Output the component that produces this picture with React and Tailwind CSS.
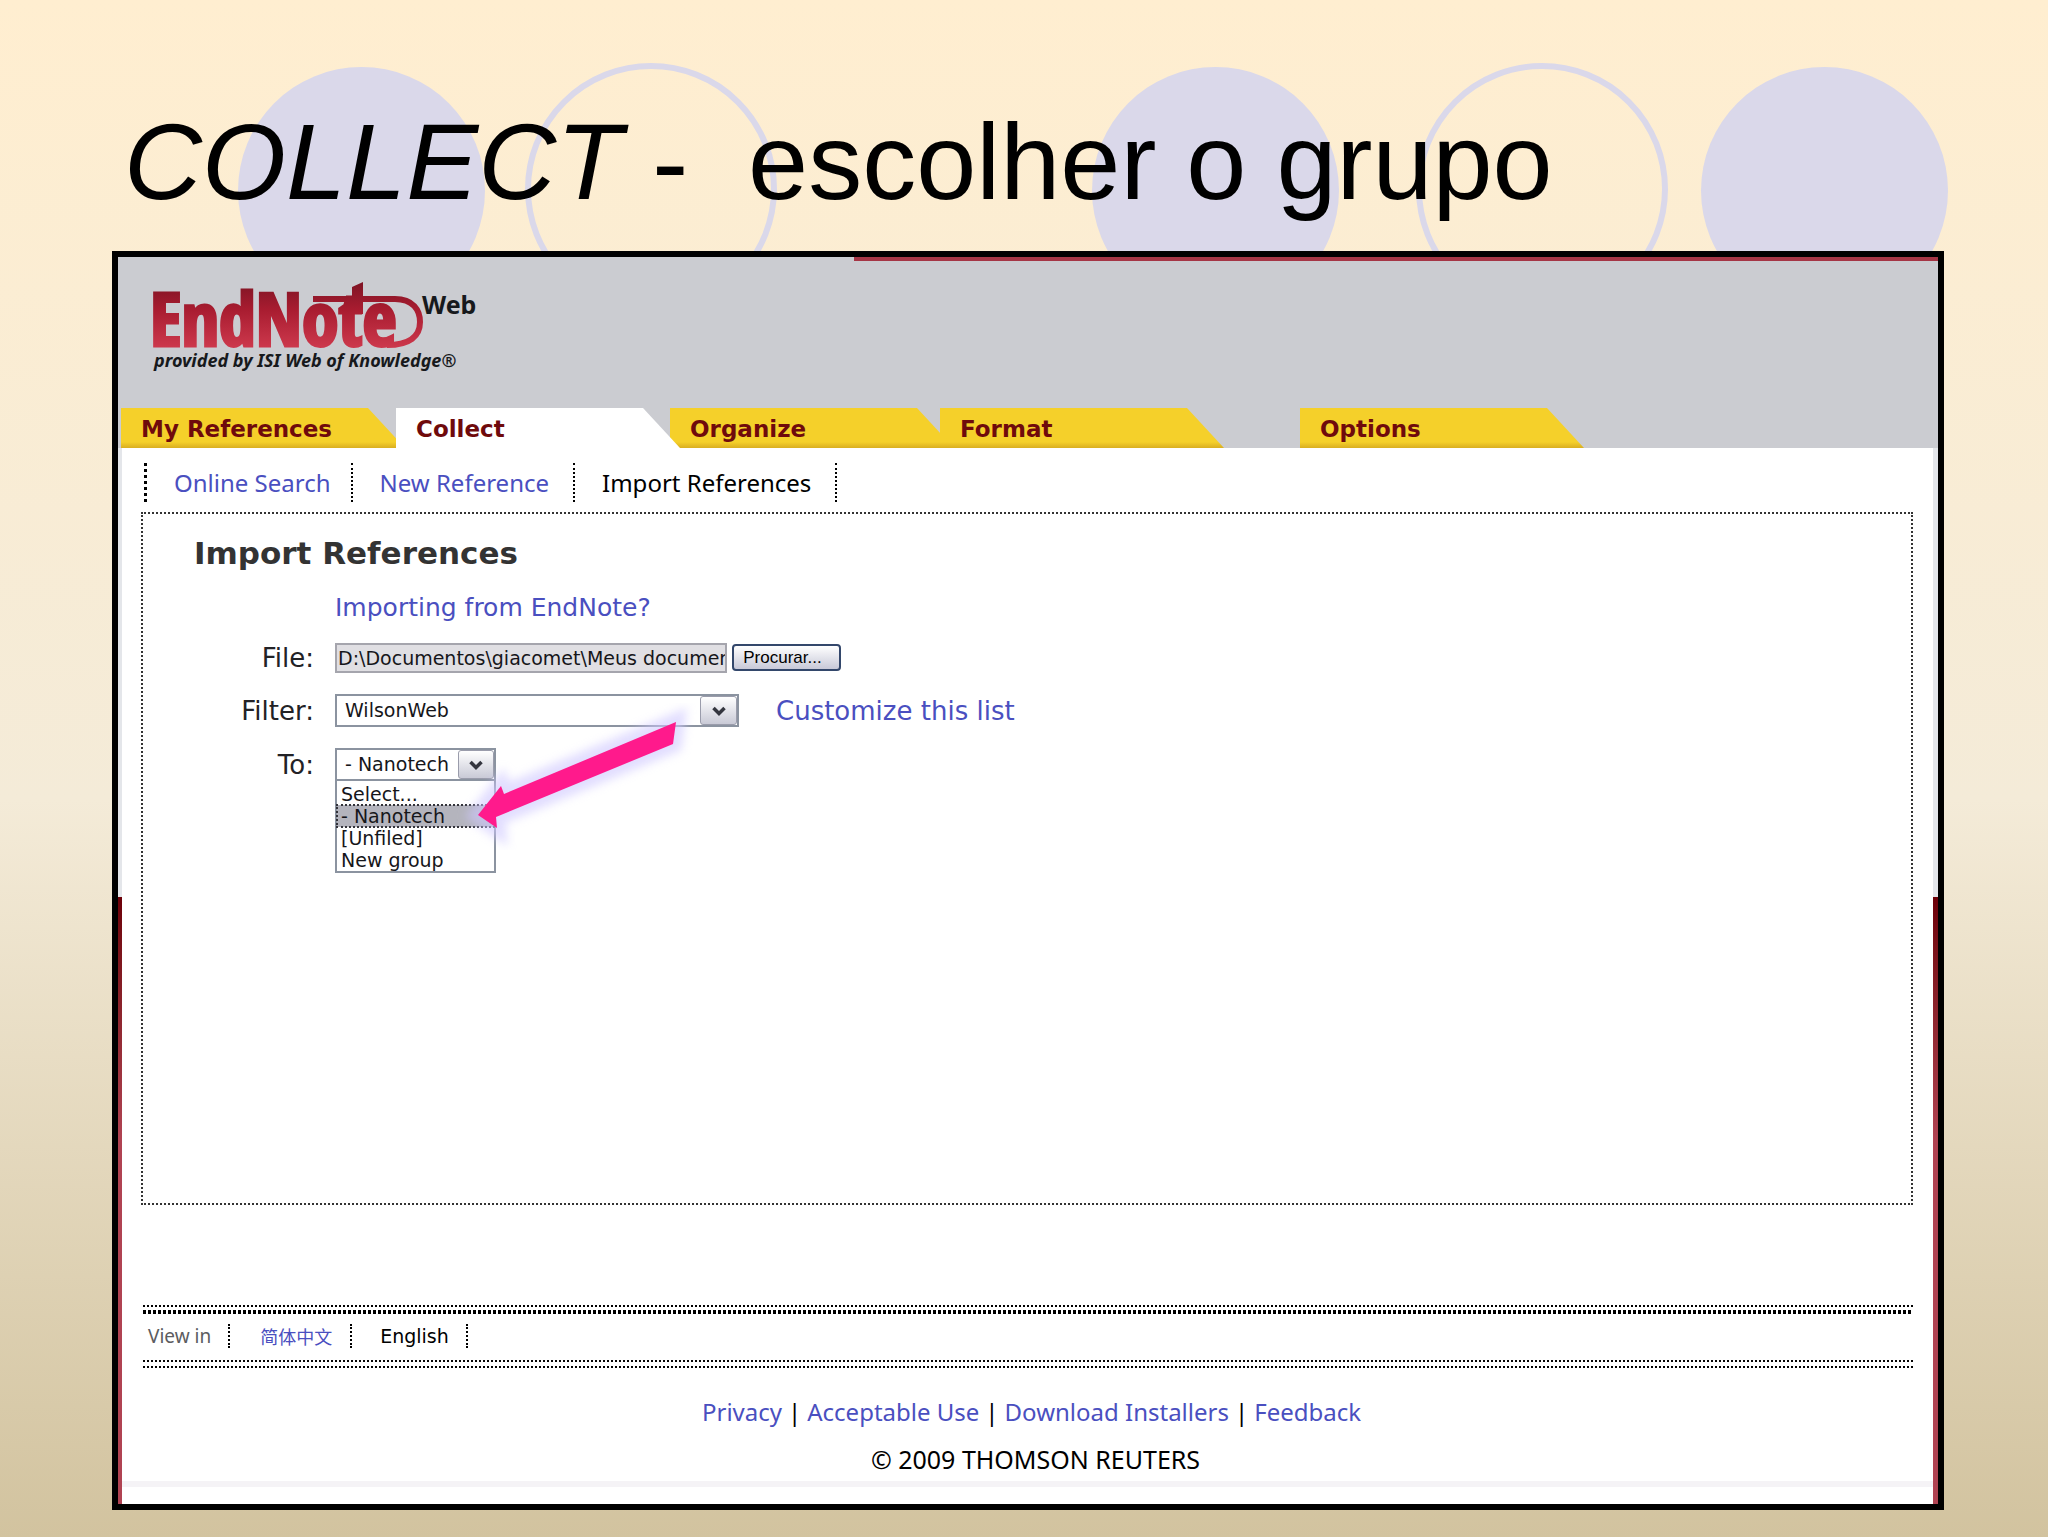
import React from "react";

const LINK = "text-[#4a4fc0] hover:underline";

function Circles() {
  return (
    <div aria-hidden="true" className="absolute inset-0 overflow-hidden">
      <div className="absolute left-[238px] top-[67px] size-[247px] rounded-full bg-[#dad8ea]" />
      <div className="absolute left-[525px] top-[63px] size-[252px] rounded-full border-[6px] border-[#dad8ea]" />
      <div className="absolute left-[1092px] top-[67px] size-[247px] rounded-full bg-[#dad8ea]" />
      <div className="absolute left-[1416px] top-[63px] size-[252px] rounded-full border-[6px] border-[#dad8ea]" />
      <div className="absolute left-[1701px] top-[67px] size-[247px] rounded-full bg-[#dad8ea]" />
    </div>
  );
}

function Logo() {
  return (
    <svg width="350" height="123" viewBox="-6 -13 350 123" role="img" aria-label="EndNote Web">
      <defs>
        <linearGradient id="logoRed" gradientUnits="userSpaceOnUse" x1="0" y1="8" x2="0" y2="76">
          <stop offset="0" stopColor="#7e1424" />
          <stop offset="0.4" stopColor="#a81c30" />
          <stop offset="1" stopColor="#cf3a4e" />
        </linearGradient>
      </defs>
      <text
        x="-1"
        y="72"
        fontSize="74"
        fontWeight="700"
        fill="url(#logoRed)"
        stroke="url(#logoRed)"
        strokeWidth="3"
        fontFamily="'Liberation Sans Narrow','Open Sans Condensed','DejaVu Sans Condensed',sans-serif"
      >
        EndNote
      </text>
      <path
        d="M162 25H244C262 25 269 36 269 48C269 62 259 71 236 71"
        fill="none"
        stroke="url(#logoRed)"
        strokeWidth="6"
      />
      <path d="M201 13L212 8V40H201Z" fill="url(#logoRed)" />
      <text x="271" y="40" fontSize="25" fontWeight="700" fill="#17191c" fontFamily="'Noto Sans',sans-serif">
        Web
      </text>
      <text
        x="3"
        y="93"
        fontSize="18"
        fontWeight="700"
        fontStyle="italic"
        fill="#17191c"
        fontFamily="'Noto Sans',sans-serif"
      >
        provided by ISI Web of Knowledge®
      </text>
    </svg>
  );
}

const TAB =
  "relative h-10 w-[284px] pt-[2px] pl-5 text-left text-[23px] leading-[38px] font-bold text-[#6f0a0c] [clip-path:polygon(0_0,calc(100%_-_37px)_0,100%_100%,0_100%)]";
const YELLOW = "bg-linear-to-b from-[#f5d02a] from-85% to-[#d9ae20]";

function Tabs() {
  return (
    <nav aria-label="Main" className="flex pl-[3px]">
      <button className={`${TAB} ${YELLOW} z-10`}>My References</button>
      <button aria-current="page" className={`${TAB} z-20 -ml-[9px] bg-white`}>
        Collect
      </button>
      <button className={`${TAB} ${YELLOW} z-10 -ml-[10px]`}>Organize</button>
      <button className={`${TAB} ${YELLOW} -ml-[14px]`}>Format</button>
      <button className={`${TAB} ${YELLOW} ml-[76px]`}>Options</button>
    </nav>
  );
}

function SubNav() {
  return (
    <nav
      aria-label="Collect"
      className="mt-[15px] ml-[22px] flex h-[39px] font-['Noto_Sans'] text-[24px] leading-[39px]"
    >
      <a href="#online" className={`${LINK} border-l-[3px] border-dotted border-l-black pr-5 pl-[27px]`}>
        Online Search
      </a>
      <a href="#new" className={`${LINK} border-l-2 border-dotted border-l-black pr-6 pl-[27px]`}>
        New Reference
      </a>
      <a
        href="#import"
        aria-current="page"
        className="border-x-2 border-dotted border-black pr-6 pl-[27px] text-black"
      >
        Import References
      </a>
    </nav>
  );
}

function ArrowBox({ className }) {
  return (
    <span
      aria-hidden="true"
      className={`pointer-events-none absolute top-[2px] right-[2px] bottom-[2px] flex items-center justify-center rounded-[3px] border border-[#9a9cab] bg-linear-to-b from-white to-[#c9cad6] ${className}`}
    >
      <svg width="14" height="10" viewBox="0 0 14 10">
        <path d="M1.5 2L7 7.5L12.500 2" fill="none" stroke="#34363f" strokeWidth="3.500" />
      </svg>
    </span>
  );
}

const SELECT =
  "h-[33px] w-full appearance-none border-2 border-[#8b93a0] bg-white px-2 text-[19px] text-[#16161a] outline-none";
const LABEL = "w-48 pr-[21px] text-right text-[26px] leading-8 text-[#222226]";

function Pointer() {
  return (
    <svg
      aria-hidden="true"
      className="pointer-events-none absolute top-[-45px] left-[115px] z-20"
      width="260"
      height="150"
      viewBox="0 0 260 150"
    >
      <defs>
        <filter id="glow" x="-20%" y="-20%" width="140%" height="140%">
          <feGaussianBlur stdDeviation="5" />
        </filter>
      </defs>
      <path
        d="M28 112L51 83L54 91L226 19L223 41L46 114L47 125Z"
        fill="#cfc8ff"
        stroke="#cfc8ff"
        strokeWidth="18"
        opacity="0.6"
        filter="url(#glow)"
      />
      <path d="M28 112L51 83L54 91L226 19L223 41L46 114L47 125Z" fill="#ff1a8c" />
    </svg>
  );
}

function ImportForm() {
  return (
    <form onSubmit={(e) => e.preventDefault()}>
      <a href="#endnote" className={`${LINK} ml-48 block w-max text-[25px] leading-8`}>
        Importing from EndNote?
      </a>
      <div className="mt-[17px] flex h-[33px] items-center">
        <label htmlFor="file" className={LABEL}>
          File:
        </label>
        <input
          id="file"
          readOnly
          defaultValue="D:\Documentos\giacomet\Meus documentos"
          className="h-[30px] w-[392px] border-2 border-[#a5a5ad] bg-[#e0dfe3] pl-px text-[19px] text-[#16161a] outline-none"
        />
        <button className="ml-[5px] h-[27px] w-[109px] rounded-[4px] border-2 border-[#33476b] bg-linear-to-b from-white to-[#c8c9d8] pr-2 font-['Liberation_Sans'] text-[17px] leading-[22px] text-black">
          Procurar...
        </button>
      </div>
      <div className="mt-5 flex h-[33px] items-center">
        <label htmlFor="filter" className={LABEL}>
          Filter:
        </label>
        <div className="relative w-[404px]">
          <select id="filter" className={SELECT}>
            <option>WilsonWeb</option>
          </select>
          <ArrowBox className="w-[37px]" />
        </div>
        <a href="#customize" className={`${LINK} ml-[37px] text-[26px] leading-8`}>
          Customize this list
        </a>
      </div>
      <div className="mt-[21px] flex h-[33px] items-center">
        <label htmlFor="to" className={LABEL}>
          To:
        </label>
        <div className="relative w-[161px]">
          <select id="to" className={SELECT}>
            <option>- Nanotech</option>
          </select>
          <ArrowBox className="w-9" />
          <ul
            role="listbox"
            aria-label="To"
            className="absolute inset-x-0 top-full border-2 border-t-0 border-[#8b93a0] bg-white pt-[2px] text-[19px] leading-[22px] text-[#16161a]"
          >
            <li role="option" aria-selected="false" className="pl-1">
              Select...
            </li>
            <li
              role="option"
              aria-selected="true"
              className="bg-[#b4b4bd] pl-1 outline-2 -outline-offset-1 outline-dotted outline-[#33333a]"
            >
              - Nanotech
            </li>
            <li role="option" aria-selected="false" className="pl-1">
              [Unfiled]
            </li>
            <li role="option" aria-selected="false" className="pl-1">
              New group
            </li>
          </ul>
          <Pointer />
        </div>
      </div>
    </form>
  );
}

function Footer() {
  return (
    <footer>
      <div className="mr-[20px] ml-[21px]">
        <div className="border-t-2 border-dotted border-black" />
        <div className="mt-[3px] h-1 bg-[repeating-linear-gradient(90deg,#000_0_3px,transparent_3px_5px)]" />
        <div className="flex h-12 items-start border-b-2 border-dotted border-black pt-[10px] text-[19px] leading-6">
          <span className="border-r-2 border-dotted border-black pr-[17px] pl-[5px] font-['Noto_Sans'] text-[#5c5c60]">
            View in
          </span>
          <a
            href="#zh"
            className={`${LINK} border-r-2 border-dotted border-r-black pr-[18px] pl-[30px] font-['Noto_Sans_CJK_SC'] text-[18px]`}
          >
            简体中文
          </a>
          <a href="#en" className="border-r-2 border-dotted border-black pr-[17px] pl-7 text-black">
            English
          </a>
        </div>
        <div className="mt-1 border-t-2 border-dotted border-black" />
      </div>
      <div className="mt-[29px] flex justify-center gap-[6px] pl-2 font-['Noto_Sans'] text-[24px] leading-[30px]">
        <a href="#privacy" className={LINK}>
          Privacy
        </a>
        <span>|</span>
        <a href="#use" className={LINK}>
          Acceptable Use
        </a>
        <span>|</span>
        <a href="#download" className={LINK}>
          Download Installers
        </a>
        <span>|</span>
        <a href="#feedback" className={LINK}>
          Feedback
        </a>
      </div>
      <p className="mt-[17px] pl-4 text-center font-['Noto_Sans'] text-[25px] leading-[30px]">
        © 2009 THOMSON REUTERS
      </p>
      <div className="mt-[7px] mb-4 h-[6px] bg-[#f5f3f6]" />
    </footer>
  );
}

export default function App() {
  return (
    <div className="flex min-h-screen flex-col bg-linear-to-b from-[#ffeed0] via-[#f4ebd8] via-52% to-[#d2c39f] pb-[27px] font-['DejaVu_Sans',sans-serif] text-black">
      <header className="relative h-[251px] pt-[102px] pl-[124px]">
        <Circles />
        <h1 className="relative font-['Liberation_Sans',sans-serif] text-[108px] leading-[120px] whitespace-pre">
          <em>COLLECT</em>
          {" -  escolher o grupo"}
        </h1>
      </header>
      <main className="mr-[104px] ml-28 flex flex-1 flex-col border-[6px] border-black bg-white">
        <div className="bg-[#cbccd1]">
          <div className="ml-[736px] h-1 bg-[#a53545]" />
          <div className="h-[147px] pl-[27px]">
            <Logo />
          </div>
          <Tabs />
        </div>
        <div className="flex flex-1 items-stretch">
          <div className="flex w-1 flex-col">
            <div className="h-[449px] bg-[#e4e6ea]" />
            <div className="flex-1 bg-linear-to-b from-[#6d0008] to-[#b04352] to-40%" />
          </div>
          <div className="flex flex-1 flex-col">
            <SubNav />
            <section className="mt-[10px] mr-[20px] ml-[19px] min-h-[693px] border-2 border-dotted border-[#333] pt-4">
              <h2 className="ml-[51px] text-[31px] leading-[46px] font-bold text-[#333]">Import References</h2>
              <div className="mt-4">
                <ImportForm />
              </div>
            </section>
            <div className="h-[100px]" />
            <Footer />
          </div>
          <div className="flex w-[5px] flex-col">
            <div className="h-[449px] bg-[#e4e6ea]" />
            <div className="flex-1 bg-linear-to-b from-[#6d0008] to-[#b04352] to-40%" />
          </div>
        </div>
      </main>
    </div>
  );
}
